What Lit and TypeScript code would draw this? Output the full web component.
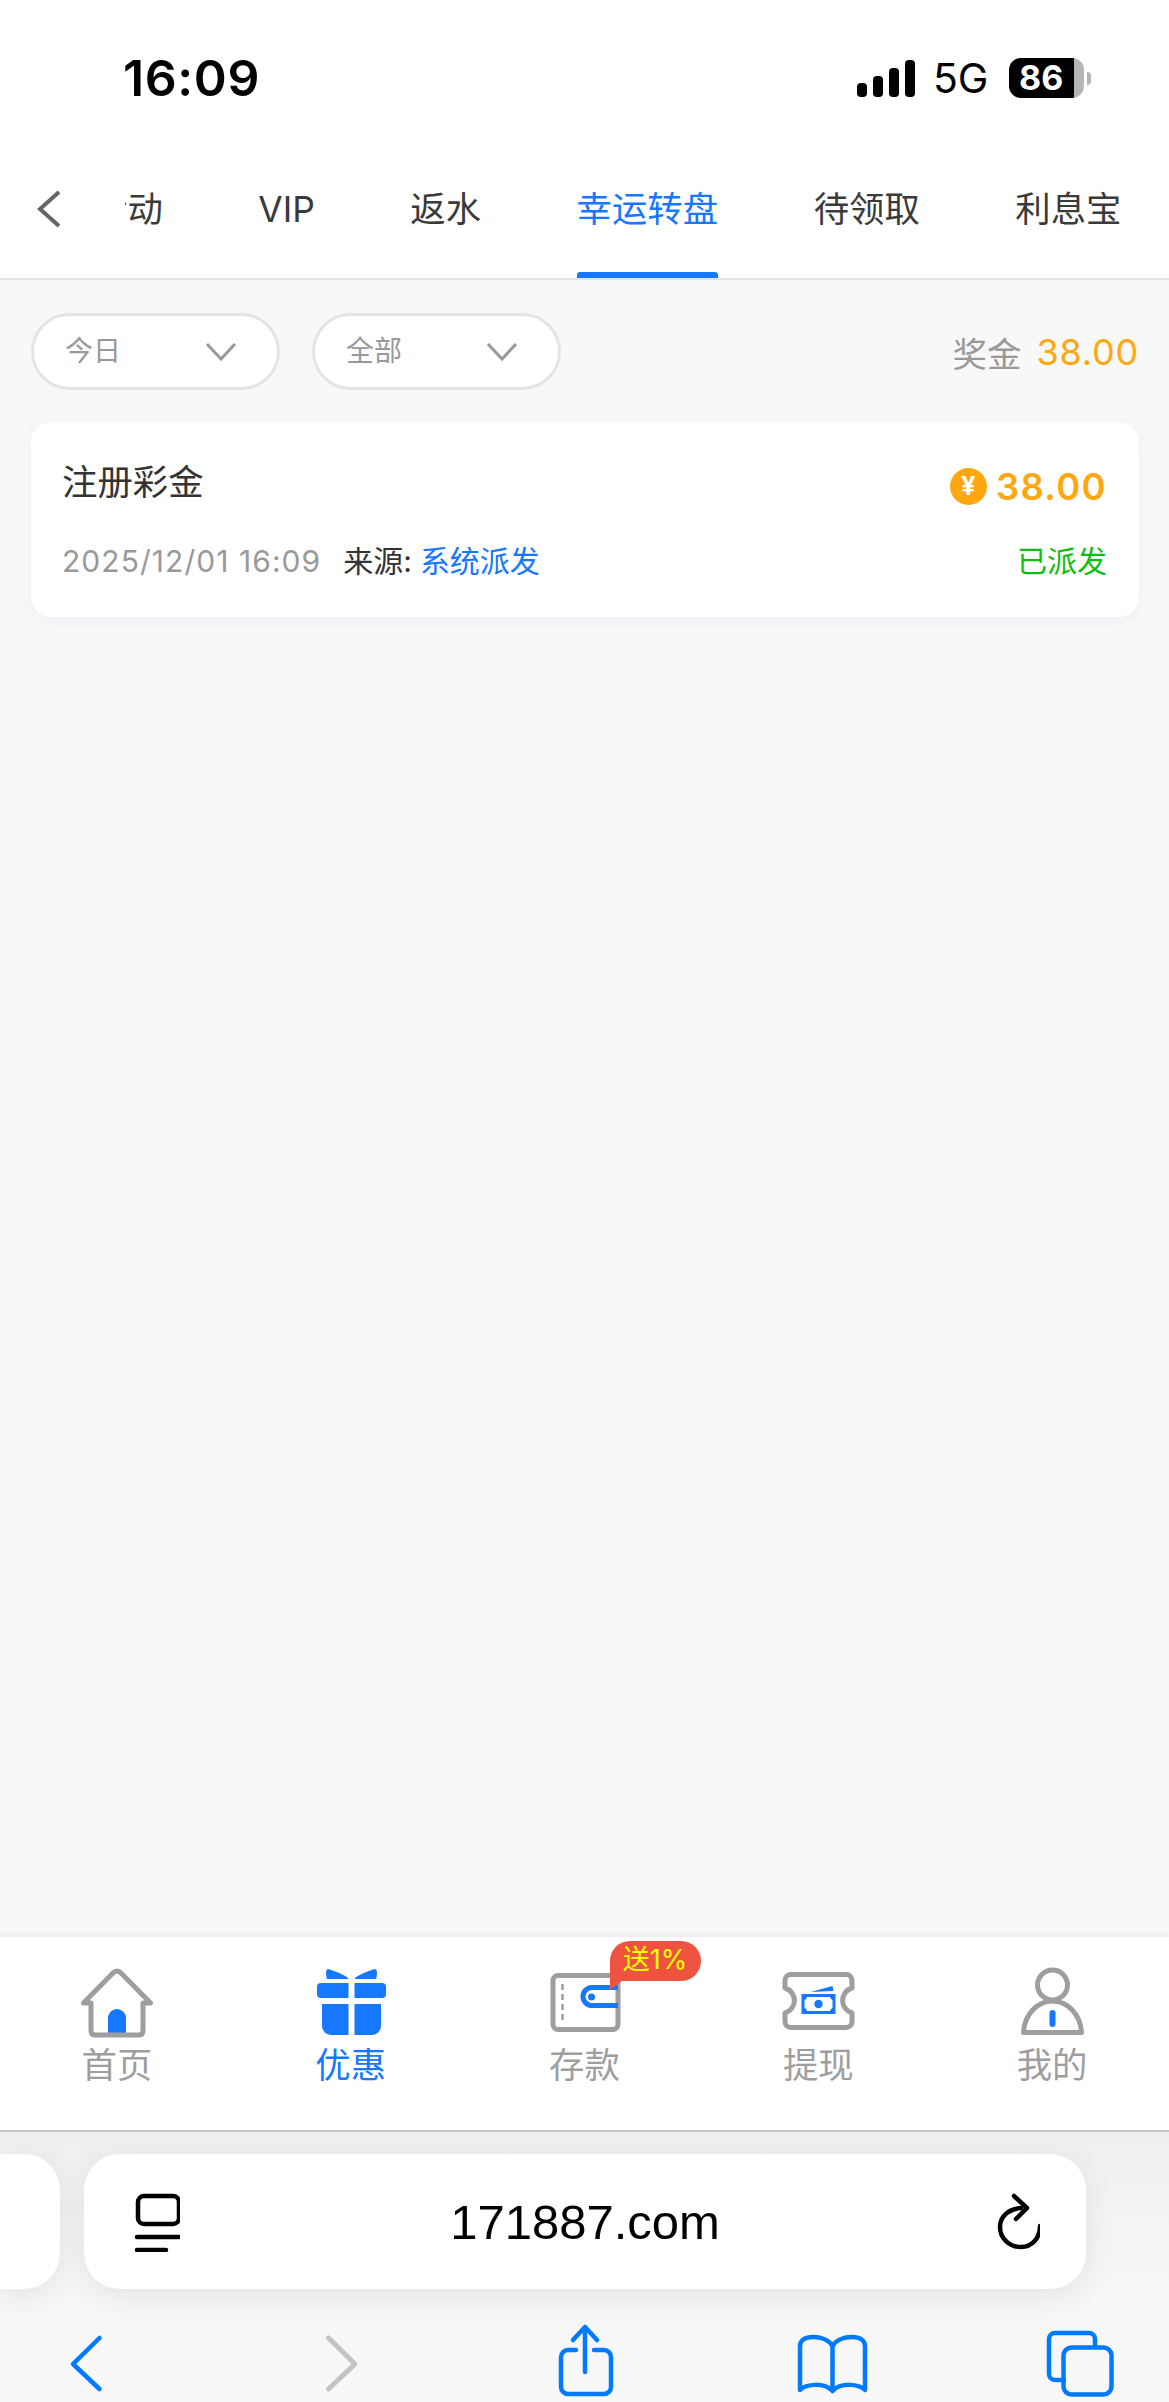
import { LitElement, html, css } from "lit";
import { customElement } from "lit/decorators.js";

const TABS = ["活动", "VIP", "返水", "幸运转盘", "待领取", "利息宝"];

@customElement("app-root")
export class AppRoot extends LitElement {
  static styles = css`
    :host {
      display: flex;
      flex-direction: column;
      width: 1169px;
      height: 2402px;
      overflow: hidden;
      background: #f8f8f9;
      font-family: Inter, "Noto Sans CJK SC", sans-serif;
      color: #333;
    }
    svg { display: block; flex: none; }
    .status {
      height: 156px;
      background: #fff;
      display: flex;
      align-items: center;
      padding: 0 78px 0 123px;
      box-sizing: border-box;
      flex: none;
    }
    .time { font-size: 50px; font-weight: 600; color: #000; letter-spacing: 0.6px; flex: 1; }
    .net { font-size: 41px; color: #000; margin: 0 21px 0 18px; letter-spacing: -.3px; }
    .battery {
      width: 75px; height: 40px; border-radius: 12px; overflow: hidden;
      background: linear-gradient(90deg, #000 65px, #b5b5b5 65px);
      color: #fff; font-size: 34px; font-weight: 700; line-height: 40px;
      padding-left: 10px; box-sizing: border-box;
    }
    .nub { width: 4px; height: 13px; margin-left: 3px; background: #b5b5b5; border-radius: 0 7px 7px 0; }

    .tabbar {
      height: 124px; flex: none; box-sizing: border-box;
      background: #fff; border-bottom: 2px solid #e3e3e3;
      display: flex;
    }
    .tabback { width: 125px; flex: none; padding: 33px 0 0 34px; box-sizing: border-box; }
    .tabclip { flex: 1; overflow: hidden; }
    .track { display: flex; gap: 95.5px; margin-left: -33px; width: max-content; }
    .tab { display: flex; flex-direction: column; font-size: 35.4px; line-height: 40px; padding-top: 34px; color: #3a3a3a; }
    .tab i { display: block; height: 6px; margin-top: 42px; border-radius: 3px 3px 0 0; }
    .tab.on { color: #1677ff; }
    .tab.on i { background: #1677ff; }

    main { flex: 1; padding: 33px 30px 0 31px; min-height: 0; }
    .filters { display: flex; align-items: center; gap: 32px; }
    .pill {
      width: 249px; height: 77px; box-sizing: border-box;
      border: 3px solid #e4e4e4; border-radius: 39px; background: #fff;
      display: flex; align-items: center; justify-content: space-between;
      padding: 0 40px 0 31px; font-size: 28px; line-height: 36px; color: #999;
    }
    .pill span { margin-top: -1px; }
    .bonus { margin-left: auto; display: flex; align-items: center; gap: 15px; font-size: 34.5px; color: #999; }
    .bonus b { font-weight: 400; color: #ffa70f; font-size: 36px; letter-spacing: .8px; }

    .card {
      margin-top: 32px; height: 195px; box-sizing: border-box;
      padding: 40px 32px 0 31px; background: #fff; border-radius: 20px;
      box-shadow: 0 4px 12px rgba(60, 80, 160, .06);
    }
    .row { display: flex; align-items: center; justify-content: space-between; }
    .r1 { height: 42px; }
    .title { font-size: 35.4px; line-height: 42px; color: #333; }
    .amount { display: flex; align-items: center; gap: 9px; font-size: 36.5px; font-weight: 600; color: #ffa70f; margin-top: 7px; letter-spacing: 1.3px; }
    .coin {
      width: 37px; height: 37px; border-radius: 50%; background: #ffa70f; color: #fff;
      font-size: 25px; font-weight: 700; line-height: 37px; text-align: center; letter-spacing: 0;
    }
    .r2 { height: 40px; margin-top: 37px; font-size: 30px; line-height: 40px; }
    .meta { display: flex; align-items: center; }
    .date { color: #999; font-size: 30px; margin-right: 22px; letter-spacing: 1.05px; }
    .src { color: #333; font-size: 30px; }
    .link { color: #1677ff; font-size: 30px; margin-left: 8px; }
    .done { color: #0dbf0d; font-size: 30px; }

    nav {
      flex: none; height: 195px; box-sizing: border-box;
      background: #fff; border-bottom: 2px solid #c6c6c6;
      box-shadow: 0 -2px 6px rgba(0, 0, 0, .06);
      display: grid; grid-template-columns: repeat(5, 1fr);
      padding-top: 29px; position: relative;
    }
    .item { display: flex; flex-direction: column; align-items: center; gap: 7px; position: relative; color: #9e9e9e; font-size: 35.4px; line-height: 42px; }
    .item.on { color: #1677ff; }
    .badge {
      position: absolute; left: 142px; top: -25px;
      width: 91px; height: 40px; box-sizing: border-box;
      background: #ee5340; color: #ff0;
      border-radius: 20px 20px 20px 0;
      font-size: 27px; line-height: 37px; text-align: center;
    }
    .badge::after {
      content: ""; position: absolute; left: 0; top: 39px;
      border-left: 0 solid transparent;
      border-top: 10px solid #ee5340;
      border-right: 13px solid transparent;
    }
    .st { fill: none; stroke: #9e9e9e; stroke-width: 5; stroke-linejoin: round; stroke-linecap: round; }
    .fb { fill: #1677ff; }
    .sb { fill: none; stroke: #1677ff; stroke-width: 5; }

    .safari {
      flex: none; height: 270px; box-sizing: border-box;
      background: linear-gradient(#efefef, #f6f6f6 55%, #f8f8f8);
      padding-top: 22px; overflow: hidden;
    }
    .urlrow { display: flex; gap: 24px; height: 135px; }
    .stub, .url { background: #fff; box-shadow: 0 6px 30px rgba(0, 0, 0, .08); }
    .stub { width: 60px; border-radius: 0 36px 36px 0; flex: none; }
    .url {
      width: 1002px; flex: none; border-radius: 36px; box-sizing: border-box;
      display: flex; align-items: center; justify-content: space-between;
      padding: 0 46px;
    }
    .host {
      font-family: "Liberation Sans", sans-serif; font-size: 49px; color: #000;
    }
    .tools { display: flex; justify-content: space-between; padding: 33px 49px 0 45px; }
    .k { fill: none; stroke: #000; stroke-width: 4.5; stroke-linecap: round; stroke-linejoin: round; }
    .bl { fill: none; stroke: #007aff; stroke-width: 4.5; stroke-linecap: round; stroke-linejoin: round; }
    .gr { fill: none; stroke: #c4c4c4; stroke-width: 5; stroke-linecap: round; stroke-linejoin: round; }
  `;

  private chevron() {
    return html`<svg width="32" height="19" viewBox="0 0 32 19"><path d="M2 2 L16 17 L30 2" fill="none" stroke="#999" stroke-width="3"/></svg>`;
  }

  private icon(i: number) {
    if (i === 0)
      return html`<svg width="80" height="72" viewBox="0 0 80 72">
        <path class="fb" d="M31 69 V52 a9 9 0 0 1 18 0 V69 Z"/>
        <path class="st" d="M14 37 H6.5 L36 7 Q40 3 44 7 L73.5 37 H66 V64 Q66 69 62 69 H18 Q14 69 14 64 Z"/>
      </svg>`;
    if (i === 1)
      return html`<svg width="80" height="72" viewBox="0 0 80 72">
        <path class="fb" d="M17 3 C24 5 32 8 37 12 V13 H16 C15 10 14 4 17 3 Z"/>
        <path class="fb" d="M64 3 C57 5 49 8 44 12 V13 H65 C66 10 67 4 64 3 Z"/>
        <path class="fb" d="M10 17 H37.500 V32 H10 a4 4 0 0 1 -4 -4 V21 a4 4 0 0 1 4 -4 Z"/>
        <path class="fb" d="M43.500 17 H71 a4 4 0 0 1 4 4 V28 a4 4 0 0 1 -4 4 H43.500 Z"/>
        <path class="fb" d="M11 38 H37.500 V69 H20 a9 9 0 0 1 -9 -9 Z"/>
        <path class="fb" d="M43.500 38 H70 V60 a9 9 0 0 1 -9 9 H43.500 Z"/>
      </svg>`;
    if (i === 2)
      return html`<svg width="80" height="72" viewBox="0 0 80 72">
        <rect class="st" x="9" y="9.500" width="65" height="54" rx="5"/>
        <path d="M18.500 18 V54" fill="none" stroke="#9e9e9e" stroke-width="2.500" stroke-dasharray="6 4"/>
        <path class="sb" d="M74 21.500 H48 a9 9 0 0 0 0 18 H74"/>
        <circle class="fb" cx="47.500" cy="31" r="3.500"/>
      </svg>`;
    if (i === 3)
      return html`<svg width="80" height="72" viewBox="0 0 80 72">
        <path class="st" d="M14 8.500 H68 a6 6 0 0 1 6 6 V22 a13 13 0 0 0 0 25 V55.500 a6 6 0 0 1 -6 6 H13 a6 6 0 0 1 -6 -6 V47 a13 13 0 0 0 0 -25 V14.500 a6 6 0 0 1 6 -6 Z"/>
        <path class="fb" d="M32.500 26 L54.500 20 L55.500 25 Z"/>
        <path class="fb" fill-rule="evenodd" d="M23.500 28 H57.500 V48 H23.500 Z M29 31 Q28.500 33.500 26.500 34 V42 Q28.500 42.500 29 45 H52 Q52.500 42.500 54.500 42 V34 Q52.500 33.500 52 31 Z"/>
        <circle class="fb" cx="40.500" cy="38" r="4.200"/>
      </svg>`;
    return html`<svg width="80" height="72" viewBox="0 0 80 72">
      <circle class="st" cx="40.500" cy="19" r="15"/>
      <path class="st" d="M11.500 66.500 C12.500 48 26 35 40.500 35 C55 35 68.500 48 69.500 66.500 Z"/>
      <path d="M40.500 47 V58" fill="none" stroke="#1677ff" stroke-width="6" stroke-linecap="round"/>
    </svg>`;
  }

  render() {
    const nav = ["首页", "优惠", "存款", "提现", "我的"];
    return html`
      <div class="status">
        <div class="time">16:09</div>
        <svg width="58" height="38" viewBox="0 0 58 38">
          <rect x="0" y="24" width="10" height="14" rx="4"/>
          <rect x="16" y="17" width="10" height="21" rx="4"/>
          <rect x="32" y="9" width="10" height="29" rx="4"/>
          <rect x="48" y="1" width="10" height="37" rx="4"/>
        </svg>
        <div class="net">5G</div>
        <div class="battery">86</div>
        <div class="nub"></div>
      </div>

      <div class="tabbar">
        <div class="tabback">
          <svg width="30" height="40" viewBox="0 0 30 40"><path d="M25 3 L6 20 L25 37" fill="none" stroke="#666" stroke-width="4"/></svg>
        </div>
        <div class="tabclip">
          <div class="track">
            ${TABS.map((t, i) => html`<div class="tab ${i === 3 ? "on" : ""}"><span>${t}</span><i></i></div>`)}
          </div>
        </div>
      </div>

      <main>
        <div class="filters">
          <div class="pill"><span>今日</span>${this.chevron()}</div>
          <div class="pill"><span>全部</span>${this.chevron()}</div>
          <div class="bonus"><span>奖金</span><b>38.00</b></div>
        </div>
        <div class="card">
          <div class="row r1">
            <div class="title">注册彩金</div>
            <div class="amount"><span class="coin">¥</span><span>38.00</span></div>
          </div>
          <div class="row r2">
            <div class="meta">
              <span class="date">2025/12/01 16:09</span>
              <span class="src">来源:</span>
              <span class="link">系统派发</span>
            </div>
            <div class="done">已派发</div>
          </div>
        </div>
      </main>

      <nav>
        ${nav.map((n, i) => html`<div class="item ${i === 1 ? "on" : ""}">
          ${this.icon(i)}<span>${n}</span>
          ${i === 2 ? html`<div class="badge">送1%</div>` : ""}
        </div>`)}
      </nav>

      <div class="safari">
        <div class="urlrow">
          <div class="stub"></div>
          <div class="url">
            <svg width="50" height="60" viewBox="-4 0 50 60">
              <rect class="k" x="4" y="4" width="41" height="28" rx="6"/>
              <path class="k" d="M3 45 H45 M3 58 H32"/>
            </svg>
            <div class="host">171887.com</div>
            <svg width="50" height="60" viewBox="-6 0 50 60">
              <path class="k" d="M44 34 C44 46 36 55 25 55 C13 55 4 46 4 35 C4 25 12 17 25 16"/>
              <path class="k" d="M18 4 L31 16 L20 27"/>
            </svg>
          </div>
        </div>
        <div class="tools">
          <svg width="80" height="80" viewBox="0 0 80 80"><path class="bl" d="M54.500 16 L28 42 L54.500 67"/></svg>
          <svg width="80" height="80" viewBox="0 0 80 80"><path class="gr" d="M34.500 16 L61 42 L34.500 67"/></svg>
          <svg width="80" height="80" viewBox="0 0 80 80">
            <path class="bl" d="M42 6 V50 M30 18 L42 5 L54 18"/>
            <path class="bl" d="M33 28 H25 a7 7 0 0 0 -7 7 V65 a7 7 0 0 0 7 7 H61 a7 7 0 0 0 7 -7 V35 a7 7 0 0 0 -7 -7 H51"/>
          </svg>
          <svg width="80" height="80" viewBox="0 0 80 80">
            <path class="bl" d="M41.500 24 C38 18 30 15 22 15 C14 15 9 18 9 24 V68 C15 62 33 60 41.500 69 C50 60 68 62 74 68 V24 C74 18 69 15 61 15 C53 15 45 18 41.500 24 V68"/>
          </svg>
          <svg width="80" height="80" viewBox="0 0 80 80">
            <path class="bl" d="M24 58 H15 a6 6 0 0 1 -6 -6 V17 a6 6 0 0 1 6 -6 H49 a6 6 0 0 1 6 6 V25"/>
            <rect class="bl" x="23.500" y="25.500" width="48" height="47" rx="8"/>
          </svg>
        </div>
      </div>
    `;
  }
}
